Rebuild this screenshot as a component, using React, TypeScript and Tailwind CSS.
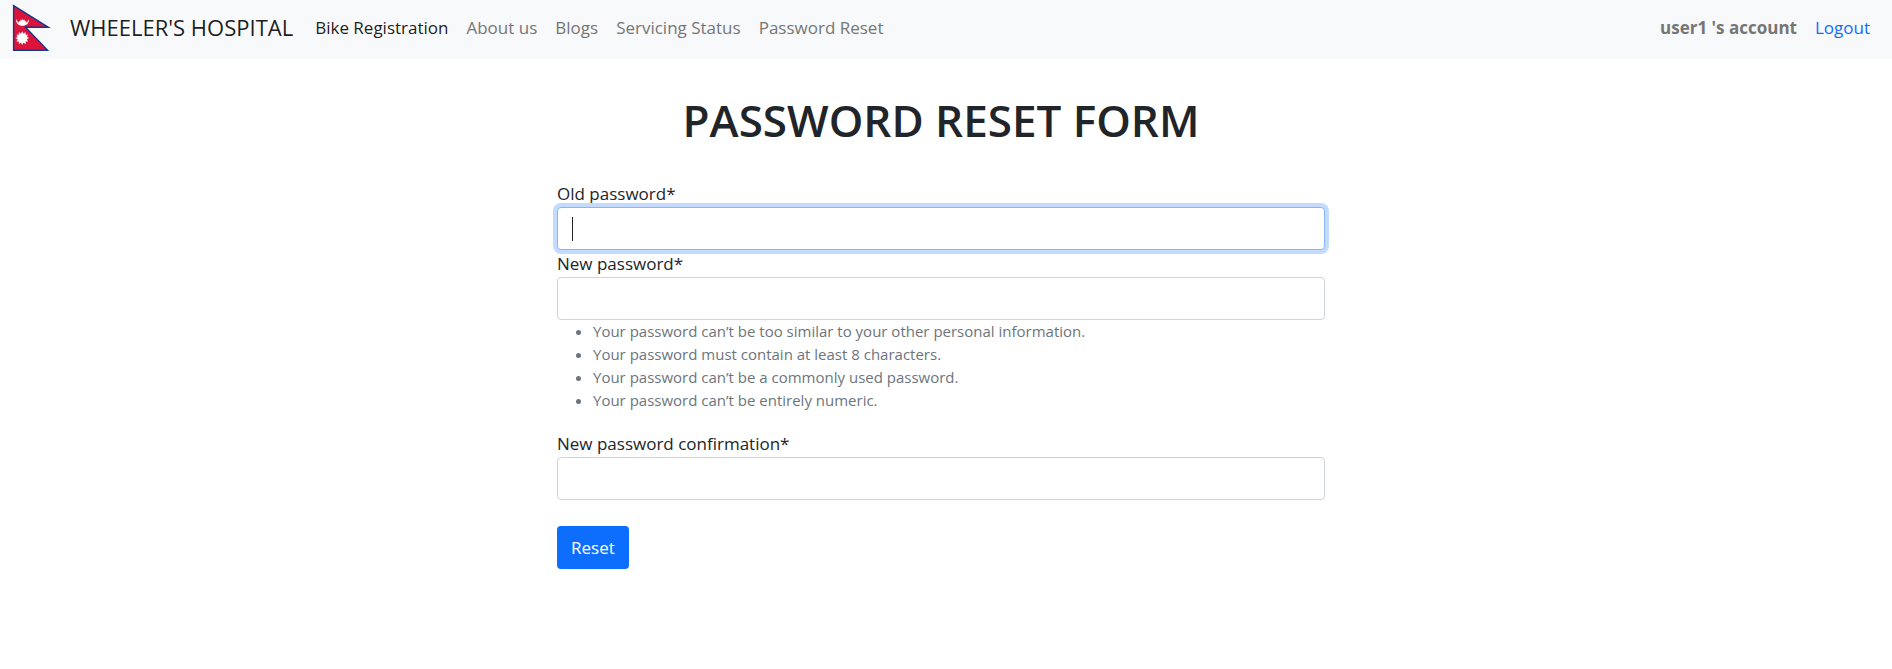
import type { ReactNode } from "react";

const links = ["About us", "Blogs", "Servicing Status", "Password Reset"];

const rules = [
  "Your password can’t be too similar to your other personal information.",
  "Your password must contain at least 8 characters.",
  "Your password can’t be a commonly used password.",
  "Your password can’t be entirely numeric.",
];

function Flag() {
  return (
    <svg width="40" height="48" viewBox="0 0 40 48" aria-hidden="true">
      <path
        d="M1.6 1.6 L36.4 23.3 H13.4 L35.6 46.3 H1.6 Z"
        fill="#dc143c"
        stroke="#123a8c"
        strokeWidth="1.4"
      />
      <path
        d="M4.2 15 C5 17.4 6.4 18.6 7.2 18.8 L6.8 17.2 L8.4 17.1 L8.7 15.5 L9.9 16.3 L10.6 14.8 L11.3 16.3 L12.5 15.5 L12.8 17.1 L14.4 17.2 L14 18.8 C15.2 18.2 16.2 17 16.8 15 C17.3 19 14.4 21.8 10.5 21.8 C6.6 21.8 3.7 19 4.2 15 Z"
        fill="#fff"
      />
      <path
        transform="translate(1.8 2) scale(0.88)"
        d="M9.6 28.7 L11 31.4 L13.5 29.6 L13.4 32.7 L16.2 32.7 L14.8 35.1 L17.4 36.5 L14.8 37.9 L16.2 40.3 L13.4 40.3 L13.5 43.4 L11 41.6 L9.6 44.3 L8.2 41.6 L5.7 43.4 L5.8 40.3 L3 40.3 L4.4 37.9 L1.8 36.5 L4.4 35.1 L3 32.7 L5.8 32.7 L5.7 29.6 L8.2 31.4 Z"
        fill="#fff"
      />
    </svg>
  );
}

function Field({
  id,
  label,
  autoFocus = false,
  children,
}: {
  id: string;
  label: string;
  autoFocus?: boolean;
  children?: ReactNode;
}) {
  return (
    <div>
      <label htmlFor={id} className="block">
        {label}*
      </label>
      <div className="relative">
        <input
          id={id}
          name={id}
          type="password"
          required
          autoFocus={autoFocus}
          placeholder=" "
          className="peer block h-[43px] w-full rounded border border-[#ced4da] bg-white px-3.5 caret-transparent outline-none not-placeholder-shown:caret-[#212529] focus:border-[#86b7fe] focus:ring-4 focus:ring-[#c2dbff]"
        />
        <span
          aria-hidden="true"
          className="pointer-events-none absolute inset-y-0 left-[15px] my-auto hidden h-6 w-px bg-[#212529] peer-focus:peer-placeholder-shown:block"
        />
      </div>
      {children}
    </div>
  );
}

export default function App() {
  return (
    <div className="font-['Open_Sans',sans-serif] text-[17px] leading-[27px] text-[#212529]">
      <nav className="flex h-[59px] items-center bg-[#f8f9fa] pr-[22px] pb-1 pl-3">
        <a href="#" className="flex items-center gap-[18px] text-[22px] text-black/90">
          <Flag />
          WHEELER'S HOSPITAL
        </a>
        <div className="ml-[22px] flex flex-1 items-center gap-[18px] text-[#757676]">
          <a href="#" className="text-black/90">
            Bike Registration
          </a>
          {links.map((link) => (
            <a key={link} href="#">
              {link}
            </a>
          ))}
        </div>
        <div className="flex items-center gap-[18px]">
          <span className="font-bold text-[#757676]">user1 's account</span>
          <a href="#" className="text-[#0d6efd]">
            Logout
          </a>
        </div>
      </nav>

      <main className="pt-[35px] pr-2.5">
        <form className="mx-auto w-full max-w-[768px]" onSubmit={(e) => e.preventDefault()}>
          <h1 className="mb-[33px] text-center text-[44px] leading-[53px] font-semibold">
            PASSWORD RESET FORM
          </h1>
          <Field id="old_password" label="Old password" autoFocus />
          <Field id="new_password1" label="New password">
            <ul className="mb-[18px] list-disc pl-9 text-[15px] leading-[23px] text-[#6c757d]">
              {rules.map((rule) => (
                <li key={rule}>{rule}</li>
              ))}
            </ul>
          </Field>
          <Field id="new_password2" label="New password confirmation" />
          <button
            type="submit"
            className="mt-[26px] h-[43px] rounded bg-[#0d6efd] px-3.5 text-white"
          >
            Reset
          </button>
        </form>
      </main>
    </div>
  );
}
